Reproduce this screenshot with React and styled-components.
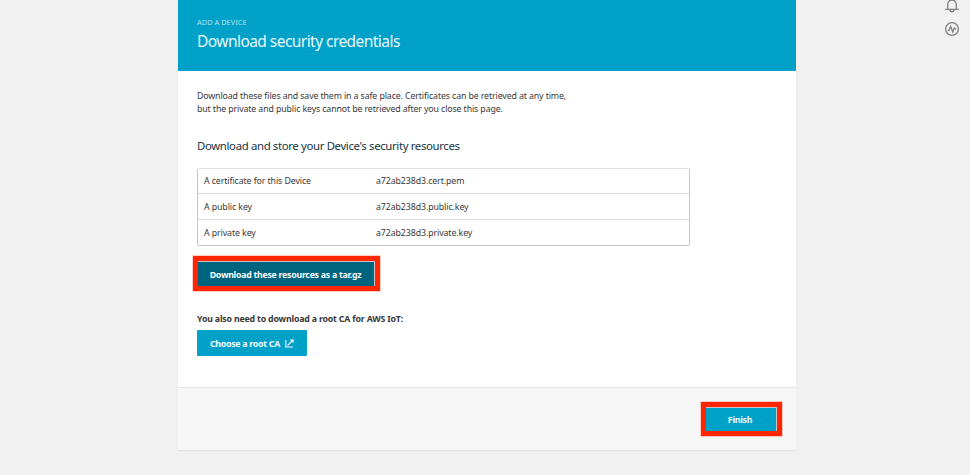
import React from "react";
import styled, { createGlobalStyle } from "styled-components";

const GlobalStyle = createGlobalStyle`
  * { box-sizing: border-box; }
  body {
    margin: 0;
    overflow: hidden;
    background: #f1f1f1;
    color: #383838;
    font-family: "Noto Sans", "Open Sans", sans-serif;
    font-size: 9px;
  }
  h1, h2, p { margin: 0; font-weight: 400; }
`;

const Page = styled.main`
  display: grid;
  grid-template-columns: 178px 618px 1fr;
  height: 475px;
  background: #f1f1f1;
`;

const Panel = styled.section`
  grid-column: 2;
  display: flex;
  flex-direction: column;
  height: 450px;
  background: #fff;
  box-shadow: 0 1px 1px #e2e2e2;
`;

const Header = styled.header`
  height: 71px;
  padding: 16px 19px 0;
  background: #00a1c9;
  border-bottom: 1px solid #16a5ca;
  color: #e8f7fb;
`;

const Eyebrow = styled.p`
  height: 12px;
  line-height: 12px;
  font-size: 7.4px;
  letter-spacing: 0.02px;
  color: #b5e4f0;
`;

const Title = styled.h1`
  margin-top: 2px;
  line-height: 22px;
  font-size: 15.5px;
  letter-spacing: -0.55px;
  white-space: nowrap;
`;

const Body = styled.div`
  height: 316px;
  padding: 19px 19px 0;
`;

const TextLine = styled.p`
  height: 12.5px;
  line-height: 13px;
  font-size: 8.8px;
  letter-spacing: -0.122px;
  white-space: nowrap;
`;

const Heading = styled.h2`
  margin-top: 22px;
  height: 19px;
  line-height: 18px;
  font-size: 11.4px;
  letter-spacing: -0.36px;
  color: #16343f;
  white-space: nowrap;
`;

const Resources = styled.div`
  margin-top: 12px;
  width: 493px;
  height: 78px;
  border: 1px solid #c8c8c8;
  border-top-color: #e0e0e0;
  border-radius: 2px;
`;

const ResourceRow = styled.div`
  display: grid;
  grid-template-columns: 172px 1fr;
  align-items: center;
  height: 26px;
  padding: 1px 6px 0;
  font-size: 8.8px;
  border-bottom: 1px solid #dadada;
  &:first-child { height: 25px; padding-top: 0; }
  &:last-child { height: 25px; border-bottom: 0; }
`;

const Cell = styled.span`
  letter-spacing: -0.1px;
  white-space: nowrap;
`;

const Button = styled.button`
  position: relative;
  display: flex;
  align-items: center;
  justify-content: center;
  width: ${(p) => p.$width}px;
  height: 26px;
  padding: 1px ${(p) => p.$padRight || 0}px 0 0;
  border: 0;
  border-radius: 1px;
  background: ${(p) => (p.$dark ? "#00647f" : "#00a1c9")};
  color: #f4fbfd;
  font-family: inherit;
  font-size: 8.8px;
  font-weight: 700;
  letter-spacing: -0.27px;
  white-space: nowrap;
`;

const Highlight = styled.span`
  position: absolute;
  inset: ${(p) => p.$inset};
  border: 5px solid #ff2600;
  box-shadow: 0 0 0 0.5px #ff9f8e;
  &::after {
    content: "";
    position: absolute;
    inset: 0;
    border-top: 1px solid #c9c4c8;
    border-right: 1px solid #c9c4c8;
  }
`;

const ButtonSlot = styled.div`
  margin-top: 15px;
`;

const Label = styled.p`
  margin-top: 25px;
  height: 14px;
  line-height: 14px;
  font-size: 8.8px;
  font-weight: 700;
  letter-spacing: -0.19px;
  white-space: nowrap;
`;

const ChooseSlot = styled.div`
  margin-top: 4px;
`;

const Footer = styled.footer`
  display: flex;
  justify-content: flex-end;
  height: 63px;
  padding: 18px 18px 0;
  background: #f7f7f7;
  border-top: 1px solid #e3e3e3;
`;

const Rail = styled.aside`
  display: flex;
  flex-direction: column;
  align-items: flex-end;
  padding-right: 10px;
`;

const RailIcon = styled.svg`
  display: block;
  width: 16px;
  height: ${(p) => p.$height}px;
  margin-top: ${(p) => p.$top || 0}px;
  fill: none;
  stroke: #808080;
  stroke-width: 1.3;
`;

const OpenIcon = styled.svg`
  width: 9px;
  height: 9px;
  margin-left: 5px;
  fill: none;
  stroke: #f0fafd;
  stroke-width: 1.1;
`;

const ROWS = [
  ["A certificate for this Device", "a72ab238d3.cert.pem"],
  ["A public key", "a72ab238d3.public.key"],
  ["A private key", "a72ab238d3.private.key"],
];

export default function App() {
  return (
    <Page>
      <GlobalStyle />
      <Panel>
        <Header>
          <Eyebrow>ADD A DEVICE</Eyebrow>
          <Title>Download security credentials</Title>
        </Header>
        <Body>
          <TextLine>
            Download these files and save them in a safe place. Certificates can be retrieved at any time,
          </TextLine>
          <TextLine>but the private and public keys cannot be retrieved after you close this page.</TextLine>
          <Heading>Download and store your Device's security resources</Heading>
          <Resources>
            {ROWS.map(([name, file]) => (
              <ResourceRow key={file}>
                <Cell>{name}</Cell>
                <Cell>{file}</Cell>
              </ResourceRow>
            ))}
          </Resources>
          <ButtonSlot>
            <Button $dark $width={179} $padRight={2}>
              Download these resources as a tar.gz
              <Highlight $inset="-5px -4px -4px -4px" />
            </Button>
          </ButtonSlot>
          <Label>You also need to download a root CA for AWS IoT:</Label>
          <ChooseSlot>
            <Button $width={110}>
              Choose a root CA
              <OpenIcon viewBox="0 0 9 9">
                <path d="M0.8 1v7H8M2.6 6.5L7.6 1.5M5.2 1H8.2V3.6" />
              </OpenIcon>
            </Button>
          </ChooseSlot>
        </Body>
        <Footer>
          <Button $width={73} $padRight={3}>
            Finish
            <Highlight $inset="-4px -4px -4px -4px" />
          </Button>
        </Footer>
      </Panel>
      <Rail>
        <RailIcon $height={14} viewBox="0 0 16 14">
          <path d="M3.8 9V4.2A4.2 4.2 0 0 1 8 0a4.2 4.2 0 0 1 4.2 4.2V9M1.2 9.4h13.6M6 9.8c0 2.6 4 2.6 4 0" />
        </RailIcon>
        <RailIcon $height={16} $top={7} viewBox="0 0 16 16">
          <circle cx="8" cy="8" r="6.4" />
          <path d="M3.8 9.5h1L6.7 5.5l2 5.5 1.6-4 1.7 1.5" />
        </RailIcon>
      </Rail>
    </Page>
  );
}
